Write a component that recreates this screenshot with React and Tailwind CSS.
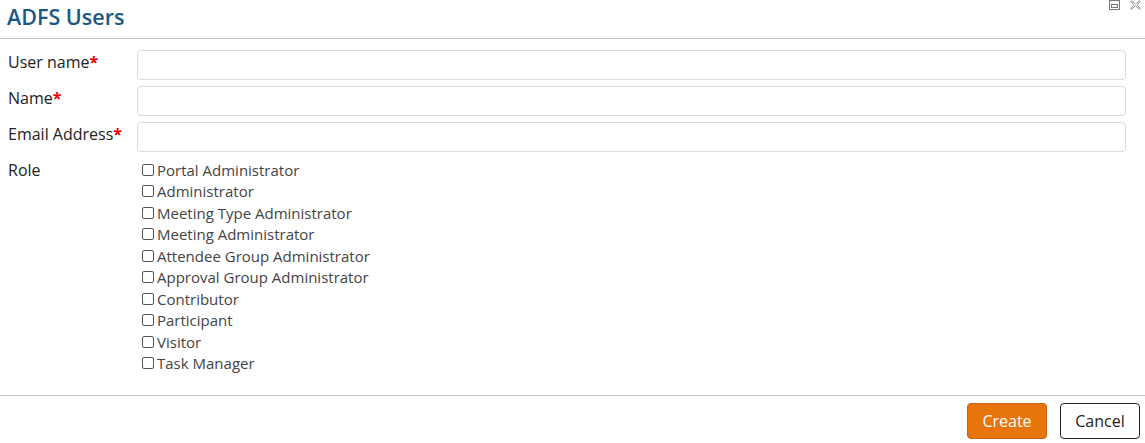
import React from "react";

const roles = [
  "Portal Administrator",
  "Administrator",
  "Meeting Type Administrator",
  "Meeting Administrator",
  "Attendee Group Administrator",
  "Approval Group Administrator",
  "Contributor",
  "Participant",
  "Visitor",
  "Task Manager",
];

function Field({ label }) {
  return (
    <div className="flex items-start h-[30px]">
      <label className="w-[137px] pl-2 pt-[1px] text-[16px] text-[#222] leading-[22px]">
        {label}
        <span className="text-[#e00] font-bold">*</span>
      </label>
      <input
        type="text"
        className="w-[989px] h-[30px] border border-[#d9d9d9] rounded-[4px] bg-white outline-none"
      />
    </div>
  );
}

export default function App() {
  return (
    <div
      className="w-[1145px] h-[443px] bg-white flex flex-col relative"
      style={{ fontFamily: '"Open Sans", "Noto Sans", sans-serif' }}
    >
      {/* window controls */}
      <div className="absolute top-0 right-[4px] flex gap-[10px] items-start">
        <svg width="11" height="10" viewBox="0 0 11 10">
          <rect x="0.5" y="0.5" width="10" height="9" fill="none" stroke="#777" />
          <rect x="2.5" y="4.5" width="6" height="3" fill="none" stroke="#777" />
        </svg>
        <svg width="11" height="10" viewBox="0 0 11 10">
          <path d="M1 0.5 L5.5 4 L10 0.5 M1 9.5 L5.5 6 L10 9.5 M0.5 1 L4 5 L0.5 9 M10.5 1 L7 5 L10.5 9" fill="none" stroke="#999" />
        </svg>
      </div>

      <div className="h-[39px] border-b border-[#c4c4c4] flex items-center pl-[7px]">
        <h1 className="text-[21.5px] text-[#1b5884] font-semibold leading-none -mt-[4px]">ADFS Users</h1>
      </div>

      <div className="flex-1 flex flex-col gap-[6px] pt-[11px]">
        <Field label="User name" />
        <Field label="Name" />
        <Field label="Email Address" />
        <div className="flex items-start mt-[1px]">
          <div className="w-[137px] pl-2 text-[16px] text-[#222] leading-[22px]">Role</div>
          <div className="flex flex-col pl-[5px]">
            {roles.map((r) => (
              <label key={r} className="flex items-center h-[21.5px] text-[15px] text-[#444]">
                <span className="w-[12px] h-[12px] border border-[#555] rounded-[2px] bg-white mr-[3px] shrink-0" />
                {r}
              </label>
            ))}
          </div>
        </div>
      </div>

      <div className="h-[48px] border-t border-[#c4c4c4] flex items-center justify-end gap-[13px] pr-[5px] pt-[3px]">
        <button className="w-[80px] h-[36px] rounded-[4px] bg-[#e8740c] border border-[#c96208] text-white text-[16px]">
          Create
        </button>
        <button className="w-[80px] h-[36px] rounded-[4px] bg-white border border-[#222] text-[#222] text-[16px]">
          Cancel
        </button>
      </div>
    </div>
  );
}
